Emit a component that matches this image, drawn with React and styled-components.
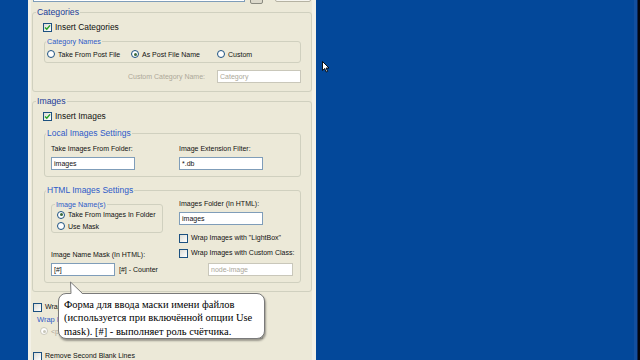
import React from "react";
import styled, { createGlobalStyle } from "styled-components";

const GlobalStyle = createGlobalStyle`
  html, body {
    margin: 0;
    padding: 0;
    background: #03489a;
  }
  body {
    font-family: "Liberation Sans", Arial, sans-serif;
    color: #111;
  }
`;

const Screen = styled.div`
  display: flex;
  width: 640px;
  height: 360px;
  overflow: hidden;
  padding-left: 28px;
  box-sizing: border-box;
  background: #03489a;
`;

const Panel = styled.div`
  position: relative;
  flex: none;
  width: 288px;
  height: 360px;
  box-sizing: border-box;
  background: #ece9d8;
  border-left: 3px solid #f3f1e7;
  border-right: 4px solid #f3f1e7;
  display: flex;
  flex-direction: column;
`;

const Desktop = styled.div`
  position: relative;
  flex: 1;
  background: #03489a;
  box-shadow: inset -2px 0 0 #04060c, inset -3px 0 0 #0a2556, inset -6px 0 0 #124f9f;
`;

const TopRow = styled.div`
  display: flex;
  align-items: flex-start;
  height: 18px;
  margin-top: -14px;
  padding-left: 2px;
`;

const TopInput = styled.div`
  width: 212px;
  height: 16px;
  box-sizing: border-box;
  border: 1px solid #7f9db9;
  background: #fff;
`;

const TopButton = styled.div`
  width: 13px;
  height: 18px;
  margin-left: 5px;
  box-sizing: border-box;
  border: 1px solid #8a8a80;
  border-radius: 2px;
  background: #dcd9cb;
`;

const TopBox = styled.div`
  width: 36px;
  height: 16px;
  margin-left: 12px;
  box-sizing: border-box;
  border: 1px solid #b5b2a2;
  border-radius: 2px;
  background: #f6f5ef;
`;

const Group = styled.fieldset`
  margin: ${(p) => p.$m || "0"};
  padding: 0;
  width: ${(p) => p.$w}px;
  min-width: 0;
  box-sizing: border-box;
  border: 1px solid ${(p) => p.$border || "#d0d0bf"};
  border-radius: 3px;
`;

const Legend = styled.legend`
  margin-left: ${(p) => (p.$ml == null ? 3 : p.$ml)}px;
  padding: 0 1px;
  font-size: ${(p) => p.$size}px;
  line-height: ${(p) => p.$lh}px;
  color: ${(p) => (p.$tone === "dark" ? "#223c98" : "#2e5bc8")};
  white-space: nowrap;
`;

const GroupBody = styled.div`
  padding: ${(p) => p.$pad};
  display: flex;
  flex-direction: column;
`;

const Check = styled.label`
  display: flex;
  align-items: center;
  gap: 3px;
  height: 10px;
  margin-top: ${(p) => p.$mt || 0}px;
  margin-left: ${(p) => p.$ml || 0}px;
  font-size: ${(p) => p.$size || 7}px;
  line-height: 10px;
  color: #111;
  white-space: nowrap;
`;

const CheckBox = styled.span`
  flex: none;
  width: 9px;
  height: 9px;
  box-sizing: border-box;
  border: 1px solid #1c5180;
  background: linear-gradient(135deg, #dcdcd5, #ffffff);
  display: inline-flex;
  align-items: center;
  justify-content: center;
`;

const Option = styled.label`
  display: flex;
  align-items: center;
  gap: 3px;
  height: ${(p) => p.$h || 10}px;
  font-size: 7px;
  color: ${(p) => (p.$disabled ? "#aca899" : "#111")};
  white-space: nowrap;
`;

const Dot = styled.span`
  position: relative;
  flex: none;
  width: 8px;
  height: 8px;
  box-sizing: border-box;
  border-radius: 50%;
  border: 1px solid ${(p) => (p.$disabled ? "#c9c7ba" : "#1c5180")};
  background: #fff;
  &::after {
    content: "";
    display: ${(p) => (p.$on ? "block" : "none")};
    position: absolute;
    inset: 1.5px;
    border-radius: 50%;
    background: ${(p) => (p.$disabled ? "#c9c7ba" : "#3b6a3b")};
  }
`;

const RadioRow = styled.div`
  display: grid;
  grid-template-columns: 84px 86px auto;
`;

const NameRow = styled.div`
  display: flex;
  justify-content: flex-end;
  align-items: center;
  gap: 12px;
  margin-top: 7px;
`;

const Label = styled.div`
  font-size: 7px;
  line-height: 9px;
  height: 9px;
  margin-top: ${(p) => p.$mt || 0}px;
  color: ${(p) => (p.$disabled ? "#aca899" : "#111")};
  white-space: nowrap;
`;

const Field = styled.div`
  width: ${(p) => p.$w}px;
  height: 13px;
  margin-top: ${(p) => p.$mt || 0}px;
  margin-left: ${(p) => p.$ml || 0}px;
  box-sizing: border-box;
  border: 1px solid ${(p) => (p.$disabled ? "#c9c7ba" : "#7f9db9")};
  background: #fff;
  padding-left: 2px;
  font-size: 7px;
  line-height: 11px;
  color: ${(p) => (p.$disabled ? "#aca899" : "#111")};
  white-space: nowrap;
  overflow: hidden;
`;

const Columns = styled.div`
  display: grid;
  grid-template-columns: ${(p) => p.$first}px auto;
  align-items: start;
`;

const Column = styled.div`
  display: flex;
  flex-direction: column;
`;

const MaskRow = styled.div`
  display: flex;
  align-items: center;
  gap: 4px;
  margin-top: 4px;
`;

const Hint = styled.span`
  font-size: 7px;
  color: #111;
`;

const Balloon = styled.div`
  position: absolute;
  left: 27px;
  top: 293px;
  width: 207px;
  height: 46px;
  box-sizing: border-box;
  padding: 3.5px 0 0 5px;
  border: 1px solid #7a7a7a;
  border-radius: 8px;
  background: #fff;
  box-shadow: 1px 2px 2px rgba(0, 0, 0, 0.35);
  font-family: "Liberation Serif", "Times New Roman", serif;
  font-size: 10.5px;
  line-height: 13.5px;
  color: #000;
  white-space: nowrap;
`;

const Tail = styled.svg`
  position: absolute;
  left: 38px;
  top: 281px;
`;

const Cursor = styled.svg`
  position: absolute;
  left: 6px;
  top: 61px;
`;

const Tick = () => (
  <svg width="7" height="7" viewBox="0 0 7 7">
    <path d="M1 3.4 L2.8 5.3 L6 1.4" fill="none" stroke="#21a121" strokeWidth="1.4" />
  </svg>
);

const CheckItem = ({ on, children, ...rest }) => (
  <Check {...rest}>
    <CheckBox>{on && <Tick />}</CheckBox>
    {children}
  </Check>
);

const Radio = ({ on, disabled, children, h }) => (
  <Option $disabled={disabled} $h={h}>
    <Dot $on={on} $disabled={disabled} />
    {children}
  </Option>
);

export default function App() {
  return (
    <>
      <GlobalStyle />
      <Screen>
        <Panel>
          <TopRow>
            <TopInput />
            <TopButton />
            <TopBox />
          </TopRow>

          <Group $w={280} $m="3px 0 0 1px">
            <Legend $tone="dark" $size={8.7} $lh={10}>Categories</Legend>
            <GroupBody $pad="5px 10px 8px 10px">
              <CheckItem on $size={8.4}>Insert Categories</CheckItem>
              <Group $w={257} $m="5px 0 0 1px">
                <Legend $size={7.2} $lh={9} $ml={1}>Category Names</Legend>
                <GroupBody $pad="3px 2px 3px 2px">
                  <RadioRow>
                    <Radio>Take From Post File</Radio>
                    <Radio on>As Post File Name</Radio>
                    <Radio>Custom</Radio>
                  </RadioRow>
                </GroupBody>
              </Group>
              <NameRow>
                <Label $disabled>Custom Category Name:</Label>
                <Field $w={84} $disabled>Category</Field>
              </NameRow>
            </GroupBody>
          </Group>

          <Group $w={280} $m="4px 0 0 1px">
            <Legend $tone="dark" $size={8.7} $lh={10}>Images</Legend>
            <GroupBody $pad="5px 10px 8px 10px">
              <CheckItem on $size={8.4}>Insert Images</CheckItem>
              <Group $w={257} $m="7px 0 0 1px">
                <Legend $size={8.5} $lh={10} $ml={1}>Local Images Settings</Legend>
                <GroupBody $pad="6px 0 6px 6px">
                  <Columns $first={128}>
                    <Column>
                      <Label>Take Images From Folder:</Label>
                      <Field $w={84} $mt={4}>images</Field>
                    </Column>
                    <Column>
                      <Label>Image Extension Filter:</Label>
                      <Field $w={84} $mt={4}>*.db</Field>
                    </Column>
                  </Columns>
                </GroupBody>
              </Group>
              <Group $w={257} $m="8px 0 0 1px">
                <Legend $size={8.5} $lh={10} $ml={1}>HTML Images Settings</Legend>
                <GroupBody $pad="0 0 6px 6px">
                  <Columns $first={128}>
                    <Column>
                      <Group $w={112} $m="5px 0 0 0">
                        <Legend $size={7.2} $lh={9} $ml={3}>Image Name(s)</Legend>
                        <GroupBody $pad="0 0 0 5px">
                          <Radio on h={11.5}>Take From Images In Folder</Radio>
                          <Radio h={11.5}>Use Mask</Radio>
                        </GroupBody>
                      </Group>
                      <Label $mt={17}>Image Name Mask (In HTML):</Label>
                      <MaskRow>
                        <Field $w={64}>[#]</Field>
                        <Hint>[#] - Counter</Hint>
                      </MaskRow>
                    </Column>
                    <Column>
                      <Label $mt={4}>Images Folder (In HTML):</Label>
                      <Field $w={84} $mt={4}>images</Field>
                      <CheckItem $mt={8}>Wrap Images with "LightBox"</CheckItem>
                      <CheckItem $mt={5}>Wrap Images with Custom Class:</CheckItem>
                      <Field $w={85} $mt={5} $ml={29} $disabled>node-image</Field>
                    </Column>
                  </Columns>
                </GroupBody>
              </Group>
            </GroupBody>
          </Group>

          <CheckItem $mt={10} $ml={2}>Wrap</CheckItem>

          <Group $w={280} $m="3px 0 0 1px" $border="transparent">
            <Legend $size={7.5} $lh={10}>Wrap I</Legend>
            <GroupBody $pad="1px 10px 3px 7px">
              <Columns $first={139}>
                <Radio disabled on>{"<p>"}</Radio>
                <Field $w={84} $disabled />
              </Columns>
            </GroupBody>
          </Group>

          <CheckItem $mt={8} $ml={2}>Remove Second Blank Lines</CheckItem>

          <Balloon>
            Форма для ввода маски имени файлов
            <br />
            (используется при включённой опции Use
            <br />
            mask). [#] - выполняет роль счётчика.
          </Balloon>
          <Tail width="16" height="15" viewBox="0 0 16 15">
            <path d="M2 14 L1.5 1 L14 13.5 L14 14 Z" fill="#fff" />
            <path d="M2 12.5 L1.5 1 L13.5 12.5" fill="none" stroke="#7a7a7a" strokeWidth="1" />
          </Tail>
        </Panel>
        <Desktop>
          <Cursor width="8" height="12" viewBox="0 0 8 12">
            <path
              d="M0.5 0.5 L0.5 9.5 L2.7 7.5 L4.3 11 L5.6 10.4 L4.1 7 L7 7 Z"
              fill="#fff"
              stroke="#000"
              strokeWidth="0.9"
              strokeLinejoin="round"
            />
          </Cursor>
        </Desktop>
      </Screen>
    </>
  );
}
